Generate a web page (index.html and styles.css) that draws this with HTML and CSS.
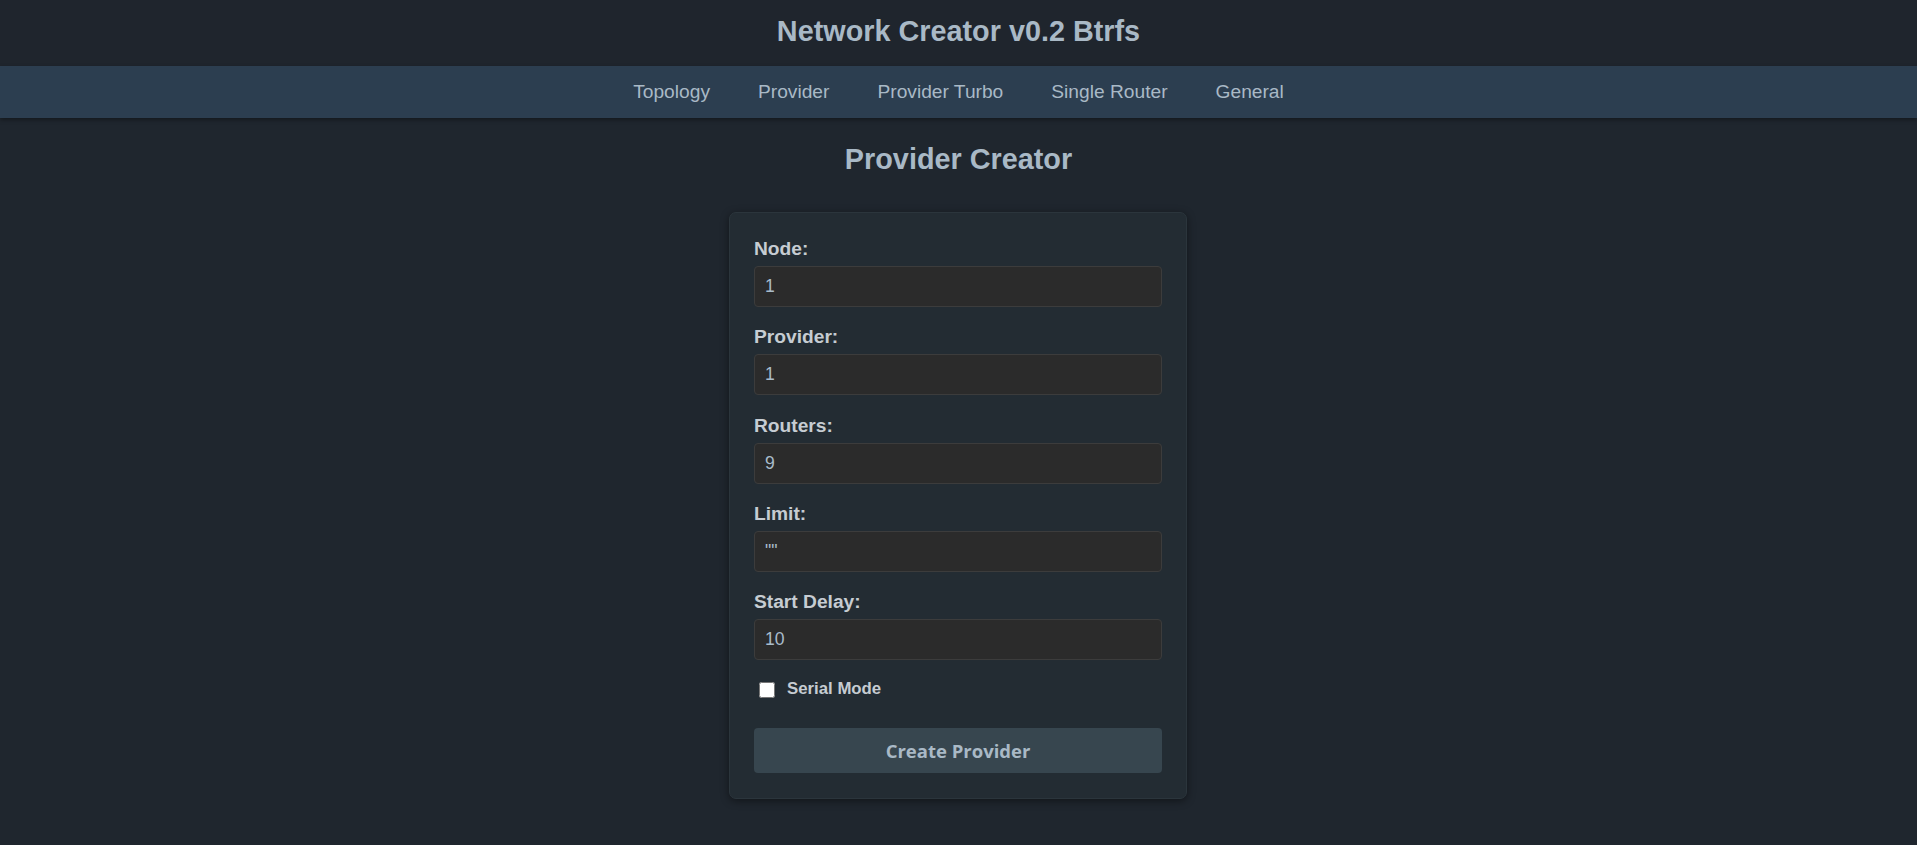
FILE: index.html
```html
<!DOCTYPE html>
<html lang="en">
<head>
<meta charset="utf-8">
<title>Network Creator v0.2 Btrfs</title>
<link rel="stylesheet" href="styles.css">
</head>
<body>
<header class="top">
  <h1 class="brand">Network Creator v0.2 Btrfs</h1>
</header>
<nav class="menu">
  <a class="menu-link" href="#">Topology</a>
  <a class="menu-link" href="#">Provider</a>
  <a class="menu-link" href="#">Provider Turbo</a>
  <a class="menu-link" href="#">Single Router</a>
  <a class="menu-link" href="#">General</a>
</nav>
<main class="content">
  <h2 class="page-title">Provider Creator</h2>
  <form class="card">
    <div class="field">
      <label class="field-label" for="node">Node:</label>
      <input class="field-input" id="node" type="text" value="1">
    </div>
    <div class="field">
      <label class="field-label" for="provider">Provider:</label>
      <input class="field-input" id="provider" type="text" value="1">
    </div>
    <div class="field">
      <label class="field-label" for="routers">Routers:</label>
      <input class="field-input" id="routers" type="text" value="9">
    </div>
    <div class="field">
      <label class="field-label" for="limit">Limit:</label>
      <input class="field-input" id="limit" type="text" value="&quot;&quot;">
    </div>
    <div class="field">
      <label class="field-label" for="delay">Start Delay:</label>
      <input class="field-input" id="delay" type="text" value="10">
    </div>
    <div class="check-row">
      <input class="check-box" id="serial" type="checkbox">
      <label class="check-label" for="serial">Serial Mode</label>
    </div>
    <button class="submit" type="button">Create Provider</button>
  </form>
</main>
</body>
</html>
```

FILE: styles.css
```css
html, body {
  margin: 0;
  padding: 0;
}

body {
  background: #1f262e;
  font-family: "Liberation Sans", Arial, sans-serif;
  color: #a9b9c6;
}

.top {
  background: #1f252d;
  height: 66px;
}

.brand {
  margin: 0;
  padding-bottom: 3px;
  line-height: 63px;
  font-size: 28.8px;
  font-weight: bold;
  text-align: center;
  color: #a9b9c6;
}

.menu {
  display: flex;
  justify-content: center;
  align-items: center;
  height: 52px;
  background: #2c3e50;
  box-shadow: 0 2px 4px rgba(0, 0, 0, 0.35);
}

.menu-link {
  padding: 0 24px;
  line-height: 52px;
  font-size: 19.2px;
  color: #a9b9c6;
  text-decoration: none;
}

.content {
  display: flex;
  flex-direction: column;
  align-items: center;
}

.page-title {
  margin: 25px 0 36px;
  font-size: 28.8px;
  font-weight: bold;
  color: #a9b9c6;
}

.card {
  box-sizing: border-box;
  width: 458px;
  padding: 24px 24px 25px;
  background: #232c33;
  border: 1px solid #2b353c;
  border-radius: 7px;
  box-shadow: 0 2px 8px rgba(0, 0, 0, 0.45);
  margin: 0 0 40px -1px;
}

.field {
  display: flex;
  flex-direction: column;
  margin-bottom: 18.3px;
}

.field-label {
  padding-top: 1px;
  font-size: 19.2px;
  font-weight: bold;
  line-height: 22px;
  color: #c6ccd2;
  margin-bottom: 6px;
}

.field-input {
  box-sizing: border-box;
  height: 41px;
  width: 100%;
  padding: 0 10px;
  background: #2b2b2b;
  border: 1px solid #3c3c3c;
  border-radius: 4px;
  font-family: "Liberation Sans", Arial, sans-serif;
  font-size: 17.6px;
  color: #a9bccb;
  outline: none;
}

.check-row {
  display: flex;
  align-items: flex-start;
  height: 20px;
}

.check-box {
  width: 16px;
  height: 16px;
  margin: 4px 12px 0 5px;
}

.check-label {
  padding-top: 1px;
  font-size: 16.8px;
  font-weight: bold;
  line-height: 19px;
  color: #c6ccd2;
}

.submit {
  display: block;
  box-sizing: border-box;
  width: 100%;
  height: 45px;
  margin-top: 29.6px;
  background: #37464f;
  border: none;
  border-radius: 4px;
  font-family: "Open Sans", "Noto Sans", sans-serif;
  font-size: 18.5px;
  font-weight: bold;
  color: #a9b9c6;
}
```
